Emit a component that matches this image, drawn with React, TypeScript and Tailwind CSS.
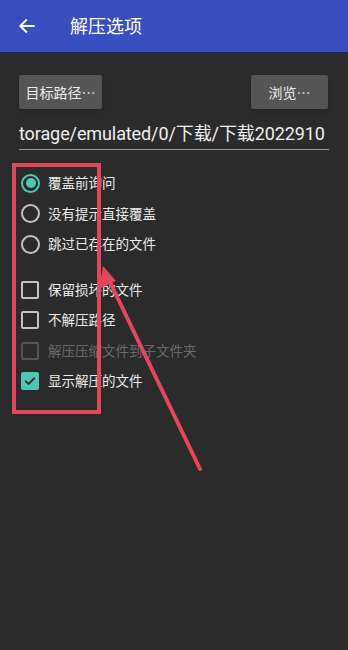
import React from "react";

const font = { fontFamily: 'Roboto, "Noto Sans CJK SC", "Noto Sans", sans-serif' };
const cjk = { fontFamily: '"Noto Sans CJK SC", Roboto, sans-serif' };

function Radio({ checked, label }: { checked?: boolean; label: string }) {
  return (
    <div className="flex items-center h-[30.5px]">
      <div
        className={`w-[19px] h-[19px] rounded-full border-2 flex items-center justify-center ${
          checked ? "border-[#4fc7b5]" : "border-[#c4c4c4]"
        }`}
      >
        {checked && <div className="w-[10px] h-[10px] rounded-full bg-[#4fc7b5]" />}
      </div>
      <span className="ml-[8px] text-[13.5px] text-[#ececec]">{label}</span>
    </div>
  );
}

function Check({ checked, disabled, label }: { checked?: boolean; disabled?: boolean; label: string }) {
  return (
    <div className="flex items-center h-[30.5px]">
      {checked ? (
        <div className="w-[18px] h-[18px] rounded-[2px] bg-[#4fc7b5] flex items-center justify-center">
          <svg width="14" height="14" viewBox="0 0 24 24" fill="none" stroke="#2a2a2a" strokeWidth="3" strokeLinecap="square">
            <path d="M5 12.5l4.5 4.5L19 7.5" />
          </svg>
        </div>
      ) : (
        <div
          className={`w-[18px] h-[18px] rounded-[2px] border-2 ${
            disabled ? "border-[#555555]" : "border-[#c4c4c4]"
          }`}
        />
      )}
      <span className={`ml-[9px] text-[13.5px] ${disabled ? "text-[#6a6a6a]" : "text-[#ececec]"}`}>{label}</span>
    </div>
  );
}

export default function App() {
  return (
    <div className="relative w-[348px] h-[650px] bg-[#2b2b2b] overflow-hidden" style={font}>
      <div className="h-[52px] bg-[#3a4fbf] flex items-center">
        <svg className="ml-[17px]" width="20" height="20" viewBox="0 0 24 24" fill="none" stroke="#ffffff" strokeWidth="2.4" strokeLinecap="square">
          <path d="M20 12H5M11 5l-7 7 7 7" />
        </svg>
        <span className="ml-[33px] text-[18px] text-white">解压选项</span>
      </div>
      <div className="px-[19px]">
        <div className="flex justify-between mt-[23px]" style={cjk}>
          <div className="h-[34px] w-[83px] bg-[#555555] rounded-[2px] flex items-center justify-center text-[14px] text-[#ececec] shadow-md">
            目标路径…
          </div>
          <div className="h-[34px] w-[77px] mr-[1px] bg-[#555555] rounded-[2px] flex items-center justify-center text-[14px] text-[#ececec] shadow-md">
            浏览…
          </div>
        </div>
        <div className="mt-[11px] border-b-[1.5px] border-[#9a9a9a] pb-[1px] whitespace-nowrap overflow-hidden text-[18px] leading-[28px] tracking-[-0.1px] text-[#f0f0f0]">
          torage/emulated/0/下载/下载2022910
        </div>
        <div className="mt-[18px] ml-[2px]">
          <Radio checked label="覆盖前询问" />
          <Radio label="没有提示直接覆盖" />
          <Radio label="跳过已存在的文件" />
          <div className="h-[15px]" />
          <Check label="保留损坏的文件" />
          <Check label="不解压路径" />
          <Check disabled label="解压压缩文件到子文件夹" />
          <Check checked label="显示解压的文件" />
        </div>
      </div>
      <svg className="absolute left-0 top-0 pointer-events-none" width="348" height="650">
        <rect x="14" y="165" width="85" height="247" fill="none" stroke="#e5475a" strokeWidth="4" />
        <line x1="200" y1="469" x2="108" y2="278" stroke="#e5475a" strokeWidth="4" strokeLinecap="round" />
        <polygon points="103,266 99,289 116,281" fill="#e5475a" />
      </svg>
    </div>
  );
}
